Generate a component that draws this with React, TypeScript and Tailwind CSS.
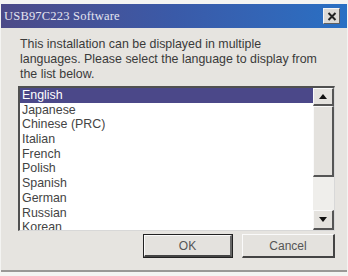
import React from "react";

const items = ["English", "Japanese", "Chinese (PRC)", "Italian", "French", "Polish", "Spanish", "German", "Russian", "Korean"];

export default function App() {
  return (
    <div className="w-[348px] h-[276px] bg-[#f4f4f2] overflow-hidden" style={{ fontFamily: '"Liberation Sans", Arial, sans-serif' }}>
      <div className="ml-[1px] mt-[4px] w-[346px] h-[268px] bg-[#e6e4e0] flex flex-col border-b-2 border-[#9a9896]">
        {/* title bar */}
        <div className="h-[24px] flex items-center justify-between bg-gradient-to-r from-[#4c4a88] via-[#3a5aa8] to-[#2870c4] pl-[3px] pr-[7px]">
          <span className="text-[12.5px] text-[#e4e4f0] tracking-[0.2px]" style={{ fontFamily: '"Liberation Serif", "Times New Roman", serif' }}>USB97C223 Software</span>
          <div className="w-[17px] h-[16px] bg-[#dcdad6] border-t border-l border-[#f4f4f4] border-r border-b border-r-[#606060] border-b-[#606060] flex items-center justify-center">
            <svg width="10" height="9" viewBox="0 0 10 9">
              <path d="M1.5 1 L8.5 8 M8.5 1 L1.5 8" stroke="#222" strokeWidth="2" />
            </svg>
          </div>
        </div>
        {/* body */}
        <div className="flex flex-col pl-[17px] pr-[12px]">
          <p className="mt-[9px] text-[12.4px] leading-[15px] text-[#3a3a3a] pl-[2px]">
            This installation can be displayed in multiple<br />
            languages. Please select the language to display from<br />
            the list below.
          </p>
          {/* list box */}
          <div className="mt-[4px] w-[317px] h-[145px] flex bg-white border-t-2 border-l-2 border-t-[#505050] border-l-[#505050] border-r border-b border-r-[#d8d8d8] border-b-[#d8d8d8] overflow-hidden">
            <div className="flex-1 flex flex-col overflow-hidden">
              {items.map((it, i) => (
                <div
                  key={it}
                  className={
                    "h-[14.7px] shrink-0 leading-[14.7px] text-[12.4px] pl-[2px] " +
                    (i === 0 ? "bg-[#4b4889] text-white" : "text-[#444]")
                  }
                >
                  {it}
                </div>
              ))}
            </div>
            {/* scrollbar */}
            <div className="w-[21px] flex flex-col bg-[#f0efec]">
              <div className="h-[18px] bg-[#e4e2de] border-t border-l border-[#fafafa] border-r-2 border-b-2 border-r-[#555] border-b-[#555] flex items-center justify-center">
                <svg width="8" height="5" viewBox="0 0 8 5"><path d="M4 0 L8 5 L0 5 Z" fill="#111" /></svg>
              </div>
              <div className="h-[71px] bg-[#e4e2de] border-t border-l border-[#fafafa] border-r-2 border-b-2 border-r-[#555] border-b-[#555]" />
              <div className="flex-1 bg-[#efeeeb]" />
              <div className="h-[20px] bg-[#e4e2de] border-t border-l border-[#fafafa] border-r-2 border-b-2 border-r-[#555] border-b-[#555] flex items-center justify-center">
                <svg width="8" height="5" viewBox="0 0 8 5"><path d="M0 0 L8 0 L4 5 Z" fill="#111" /></svg>
              </div>
            </div>
          </div>
          {/* buttons */}
          <div className="mt-[3px] flex justify-end gap-[9px]">
            <div className="w-[90px] h-[24px] border border-[#222] bg-[#e4e2de]">
              <div className="w-full h-full border-t border-l border-[#fafafa] border-r-2 border-b-2 border-r-[#666] border-b-[#444] flex items-center justify-center text-[12px] text-[#555]">
                OK
              </div>
            </div>
            <div className="w-[93px] h-[24px] bg-[#e4e2de] border-t border-l border-[#fafafa] border-r-2 border-b-2 border-r-[#444] border-b-[#444] flex items-center justify-center text-[12px] text-[#555]">
              Cancel
            </div>
          </div>
        </div>
      </div>
    </div>
  );
}
